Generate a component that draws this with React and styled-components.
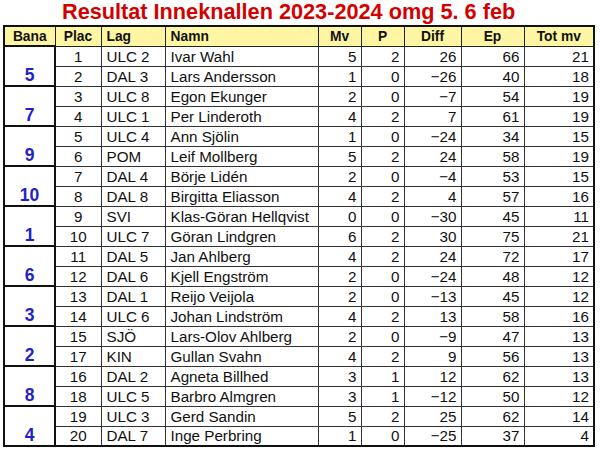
import React from 'react';
import styled, { createGlobalStyle } from 'styled-components';

const GlobalStyle = createGlobalStyle`
  body {
    margin: 0;
    background: #fff;
    font-family: 'Liberation Sans', Arial, sans-serif;
  }
`;

const Page = styled.div`
  width: 600px;
  height: 456px;
  padding: 0 0 0 3px;
  box-sizing: border-box;
  background: #fff;
`;

const Title = styled.h1`
  margin: 0;
  height: 25px;
  padding-left: 59px;
  font-family: 'Liberation Sans', Arial, sans-serif;
  font-size: 21.7px;
  line-height: 24px;
  font-weight: 700;
  color: #d40000;
  white-space: nowrap;
`;

const Table = styled.table`
  border-collapse: collapse;
  table-layout: fixed;
  width: 590px;
  border: 2px solid #111;
  font-size: 15.2px;
  color: #111;
`;

const HeadCell = styled.th`
  height: 18px;
  padding: 0;
  background: #fff6a3;
  border: 1px solid #222;
  font-size: 13.8px;
  font-weight: 700;
  text-align: ${(p) => p.$align || 'center'};
  padding-left: ${(p) => (p.$align === 'left' ? '5px' : '0')};
  vertical-align: middle;
`;

const Row = styled.tr`
  height: 20px;
`;

const BanaCell = styled.td`
  border: 2px solid #111;
  padding: 0 0 1px;
  text-align: center;
  vertical-align: bottom;
  font-size: 17.5px;
  font-weight: 700;
  color: #1f22c8;
  line-height: 18px;
`;

const Cell = styled.td`
  border: 1px solid #333;
  padding: 0 ${(p) => (p.$align === 'right' ? '4px' : '0')} 0 ${(p) => (p.$align === 'left' ? '5px' : '0')};
  text-align: ${(p) => p.$align || 'center'};
  vertical-align: bottom;
  line-height: 18px;
  white-space: nowrap;
  overflow: hidden;
`;

const columns = [51, 46, 64, 153, 43, 43, 57, 63, 70];

const groups = [
  { bana: 5, rows: [
    [1, 'ULC 2', 'Ivar Wahl', 5, 2, '26', 66, 21],
    [2, 'DAL 3', 'Lars Andersson', 1, 0, '−26', 40, 18],
  ] },
  { bana: 7, rows: [
    [3, 'ULC 8', 'Egon Ekunger', 2, 0, '−7', 54, 19],
    [4, 'ULC 1', 'Per Linderoth', 4, 2, '7', 61, 19],
  ] },
  { bana: 9, rows: [
    [5, 'ULC 4', 'Ann Sjölin', 1, 0, '−24', 34, 15],
    [6, 'POM', 'Leif Mollberg', 5, 2, '24', 58, 19],
  ] },
  { bana: 10, rows: [
    [7, 'DAL 4', 'Börje Lidén', 2, 0, '−4', 53, 15],
    [8, 'DAL 8', 'Birgitta Eliasson', 4, 2, '4', 57, 16],
  ] },
  { bana: 1, rows: [
    [9, 'SVI', 'Klas-Göran Hellqvist', 0, 0, '−30', 45, 11],
    [10, 'ULC 7', 'Göran Lindgren', 6, 2, '30', 75, 21],
  ] },
  { bana: 6, rows: [
    [11, 'DAL 5', 'Jan Ahlberg', 4, 2, '24', 72, 17],
    [12, 'DAL 6', 'Kjell Engström', 2, 0, '−24', 48, 12],
  ] },
  { bana: 3, rows: [
    [13, 'DAL 1', 'Reijo Veijola', 2, 0, '−13', 45, 12],
    [14, 'ULC 6', 'Johan Lindström', 4, 2, '13', 58, 16],
  ] },
  { bana: 2, rows: [
    [15, 'SJÖ', 'Lars-Olov Ahlberg', 2, 0, '−9', 47, 13],
    [17, 'KIN', 'Gullan Svahn', 4, 2, '9', 56, 13],
  ] },
  { bana: 8, rows: [
    [16, 'DAL 2', 'Agneta Billhed', 3, 1, '12', 62, 13],
    [18, 'ULC 5', 'Barbro Almgren', 3, 1, '−12', 50, 12],
  ] },
  { bana: 4, rows: [
    [19, 'ULC 3', 'Gerd Sandin', 5, 2, '25', 62, 14],
    [20, 'DAL 7', 'Inge Perbring', 1, 0, '−25', 37, 4],
  ] },
];

const App = () => (
  <Page>
    <GlobalStyle />
    <Title>Resultat Inneknallen 2023-2024 omg 5. 6 feb</Title>
    <Table>
      <colgroup>
        {columns.map((w, i) => (
          <col key={i} style={{ width: w }} />
        ))}
      </colgroup>
      <thead>
        <tr>
          <HeadCell>Bana</HeadCell>
          <HeadCell>Plac</HeadCell>
          <HeadCell $align="left">Lag</HeadCell>
          <HeadCell $align="left">Namn</HeadCell>
          <HeadCell>Mv</HeadCell>
          <HeadCell>P</HeadCell>
          <HeadCell>Diff</HeadCell>
          <HeadCell>Ep</HeadCell>
          <HeadCell>Tot mv</HeadCell>
        </tr>
      </thead>
      <tbody>
        {groups.map((g) =>
          g.rows.map((r, i) => (
            <Row key={r[0]}>
              {i === 0 && <BanaCell rowSpan={2}>{g.bana}</BanaCell>}
              <Cell>{r[0]}</Cell>
              <Cell $align="left">{r[1]}</Cell>
              <Cell $align="left">{r[2]}</Cell>
              <Cell $align="right">{r[3]}</Cell>
              <Cell $align="right">{r[4]}</Cell>
              <Cell $align="right">{r[5]}</Cell>
              <Cell $align="right">{r[6]}</Cell>
              <Cell $align="right">{r[7]}</Cell>
            </Row>
          ))
        )}
      </tbody>
    </Table>
  </Page>
);

export default App;
